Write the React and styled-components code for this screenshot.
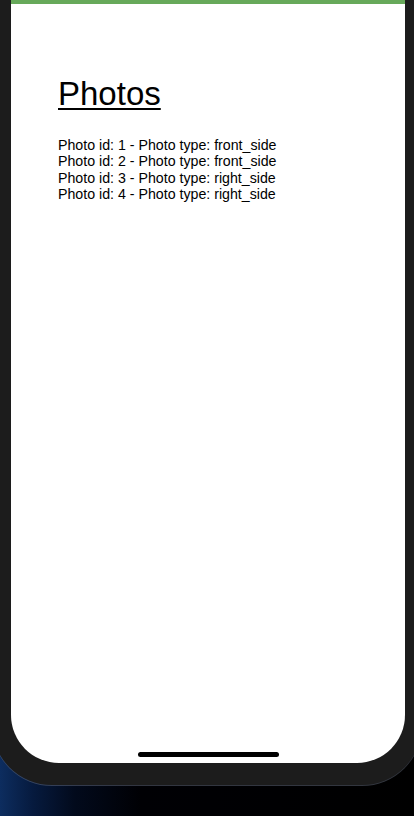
import React from "react";
import styled, { createGlobalStyle } from "styled-components";

const GlobalStyle = createGlobalStyle`
  html, body {
    margin: 0;
    padding: 0;
    height: 816px;
    overflow: hidden;
    background: #000;
  }
  * {
    box-sizing: border-box;
  }
`;

const Page = styled.div`
  width: 414px;
  height: 816px;
  overflow: hidden;
  background: linear-gradient(
    to right,
    #0d2d5f 0%,
    #061a3e 8%,
    #020a1c 18%,
    #000004 34%,
    #000 100%
  );
`;

const Device = styled.div`
  margin: 0 -8px;
  height: 785px;
  padding: 0 17px 22px 19px;
  background: #1c1c1c;
  border-bottom-left-radius: 60px;
  border-bottom-right-radius: 60px;
  box-shadow: 0 1px 0 rgba(110, 120, 140, 0.45);
`;

const Screen = styled.div`
  position: relative;
  height: 100%;
  background: #fff;
  border-top: 4px solid #67a95a;
  border-bottom-left-radius: 48px;
  border-bottom-right-radius: 48px;
  padding: 71px 0 0 47px;
  font-family: "Liberation Sans", Arial, Helvetica, sans-serif;
  color: #000;
`;

const Title = styled.h1`
  margin: 0 0 24px;
  font-size: 33px;
  font-weight: 400;
  line-height: normal;
  text-decoration: underline;
  text-underline-offset: 3px;
  text-decoration-thickness: 2px;
`;

const PhotoList = styled.div`
  display: flex;
  flex-direction: column;
`;

const PhotoRow = styled.div`
  font-size: 14.2px;
  line-height: 16.3px;
`;

const HomeIndicator = styled.div`
  position: absolute;
  left: 50%;
  bottom: 6px;
  width: 141px;
  height: 5px;
  margin-left: -70px;
  border-radius: 3px;
  background: #000;
`;

const photos = [
  { id: 1, type: "front_side" },
  { id: 2, type: "front_side" },
  { id: 3, type: "right_side" },
  { id: 4, type: "right_side" },
];

export default function App() {
  return (
    <>
      <GlobalStyle />
      <Page>
        <Device>
          <Screen>
            <Title>Photos</Title>
            <PhotoList>
              {photos.map(p => (
                <PhotoRow key={p.id}>
                  Photo id: {p.id} - Photo type: {p.type}
                </PhotoRow>
              ))}
            </PhotoList>
            <HomeIndicator />
          </Screen>
        </Device>
      </Page>
    </>
  );
}
